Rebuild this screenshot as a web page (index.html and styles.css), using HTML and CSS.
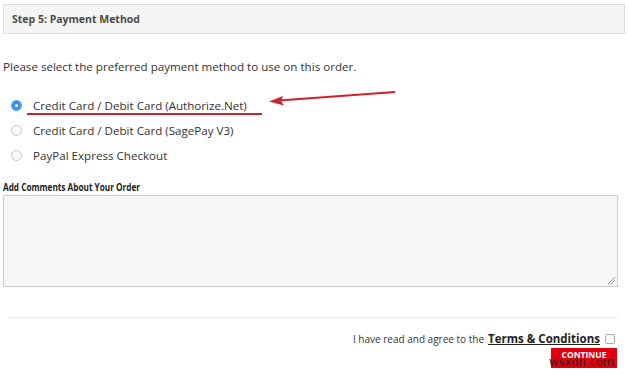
FILE: index.html
```html
<!DOCTYPE html>
<html>
<head lang="en">
    <meta charset="UTF-8">
    <title>Checkout</title>
    <link rel="stylesheet" href="styles.css">
</head>
<body>
<div id="step-head">Step 5: Payment Method</div>

<p class="intro">Please select the preferred payment method to use on this order.</p>

<div class="methods">
    <label class="method picked">
        <span class="radio on"></span>
        <span class="method-name">Credit Card / Debit Card (Authorize.Net)</span>
        <svg class="arrow" width="130" height="20" viewBox="0 0 130 20">
            <path d="M128 3 L12 11.5" stroke="#d0222a" stroke-width="2" fill="none"/>
            <path d="M2 12.5 L16 7 L14 12 L17 16.5 Z" fill="#d0222a"/>
        </svg>
    </label>
    <label class="method">
        <span class="radio"></span>
        <span class="method-name">Credit Card / Debit Card (SagePay V3)</span>
    </label>
    <label class="method">
        <span class="radio"></span>
        <span class="method-name">PayPal Express Checkout</span>
    </label>
</div>

<div class="comments-title"><span>Add Comments About Your Order</span></div>
<div class="comments-box"></div>

<div class="rule"></div>

<div class="terms">
    I have read and agree to the <a href="#">Terms &amp; Conditions</a>
    <span class="check"></span>
</div>
<div class="actions">
    <span class="btn-continue">CONTINUE</span>
    <span class="mark">wsxdn.com</span>
</div>
</body>
</html>
```

FILE: styles.css
```css
* {
    padding: 0;
    margin: 0;
    box-sizing: border-box;
}

body {
    background: #ffffff;
    font-family: "Open Sans", "Liberation Sans", sans-serif;
    color: #333333;
    padding: 4px 4px 0 3px;
    width: 629px;
    height: 375px;
    overflow: hidden;
}

#step-head {
    height: 30px;
    line-height: 28px;
    background: #f5f5f5;
    border: 1px solid #dedede;
    padding-left: 8px;
    font-size: 10.5px;
    font-weight: bold;
    color: #4a4a4a;
}

.intro {
    margin-top: 24px;
    font-size: 11.6px;
    line-height: 18px;
    color: #333;
}

.methods {
    margin-top: 17px;
}

.method {
    display: flex;
    align-items: center;
    height: 25px;
    font-size: 11.6px;
    color: #333;
    position: relative;
}

.radio {
    width: 11px;
    height: 11px;
    border-radius: 50%;
    border: 1px solid #c8c8c8;
    background: #fafafa;
    margin-left: 8px;
    margin-right: 11px;
}

.radio.on {
    border-color: #3a8ee6;
    box-shadow: inset 0 0 0 3px #3a8ee6, inset 0 0 0 5px #fff;
    background: #fff;
}

.picked .method-name {
    position: relative;
}

.picked .method-name::after {
    content: "";
    position: absolute;
    left: -6px;
    right: -15px;
    bottom: -2px;
    height: 2px;
    background: #c1272d;
}

.arrow {
    position: absolute;
    left: 264px;
    top: -4px;
}

.comments-title {
    margin-top: 12px;
    font-size: 10px;
    font-weight: bold;
    color: #222;
    line-height: 14px;
}

.comments-title span {
    display: inline-block;
    transform: scaleX(0.82);
    transform-origin: 0 0;
}

.comments-box {
    margin-top: 1px;
    width: 615px;
    height: 92px;
    background: #f7f7f7;
    border: 1px solid #cccccc;
    position: relative;
}

.comments-box::after {
    content: "";
    position: absolute;
    right: 2px;
    bottom: 2px;
    width: 7px;
    height: 7px;
    background: linear-gradient(135deg, transparent 45%, #999 45%, #999 52%, transparent 52%, transparent 70%, #999 70%, #999 77%, transparent 77%);
}

.rule {
    margin: 30px 7px 0 5px;
    height: 2px;
    background: #efefef;
    border-bottom: 1px solid #f6f6f6;
}

.terms {
    margin-top: 12px;
    display: flex;
    justify-content: flex-end;
    align-items: center;
    font-size: 10px;
    color: #333;
    padding-right: 10px;
    gap: 4px;
}

.terms a {
    font-weight: bold;
    font-size: 11.5px;
    color: #222;
    text-decoration: underline;
}

.check {
    width: 10px;
    height: 10px;
    border: 1px solid #aaa;
    border-radius: 2px;
    margin-left: 1px;
}

.actions {
    display: flex;
    justify-content: flex-end;
    padding-right: 8px;
    margin-top: 2px;
    position: relative;
}

.btn-continue {
    display: block;
    width: 66px;
    height: 20px;
    line-height: 14px;
    background: #e2000f;
    color: #fff;
    font-size: 8.5px;
    font-weight: bold;
    text-align: center;
}

.mark {
    position: absolute;
    right: 11px;
    top: 8px;
    font-family: "DejaVu Sans", sans-serif;
    font-size: 11.5px;
    color: #222;
    line-height: 12px;
}
```
